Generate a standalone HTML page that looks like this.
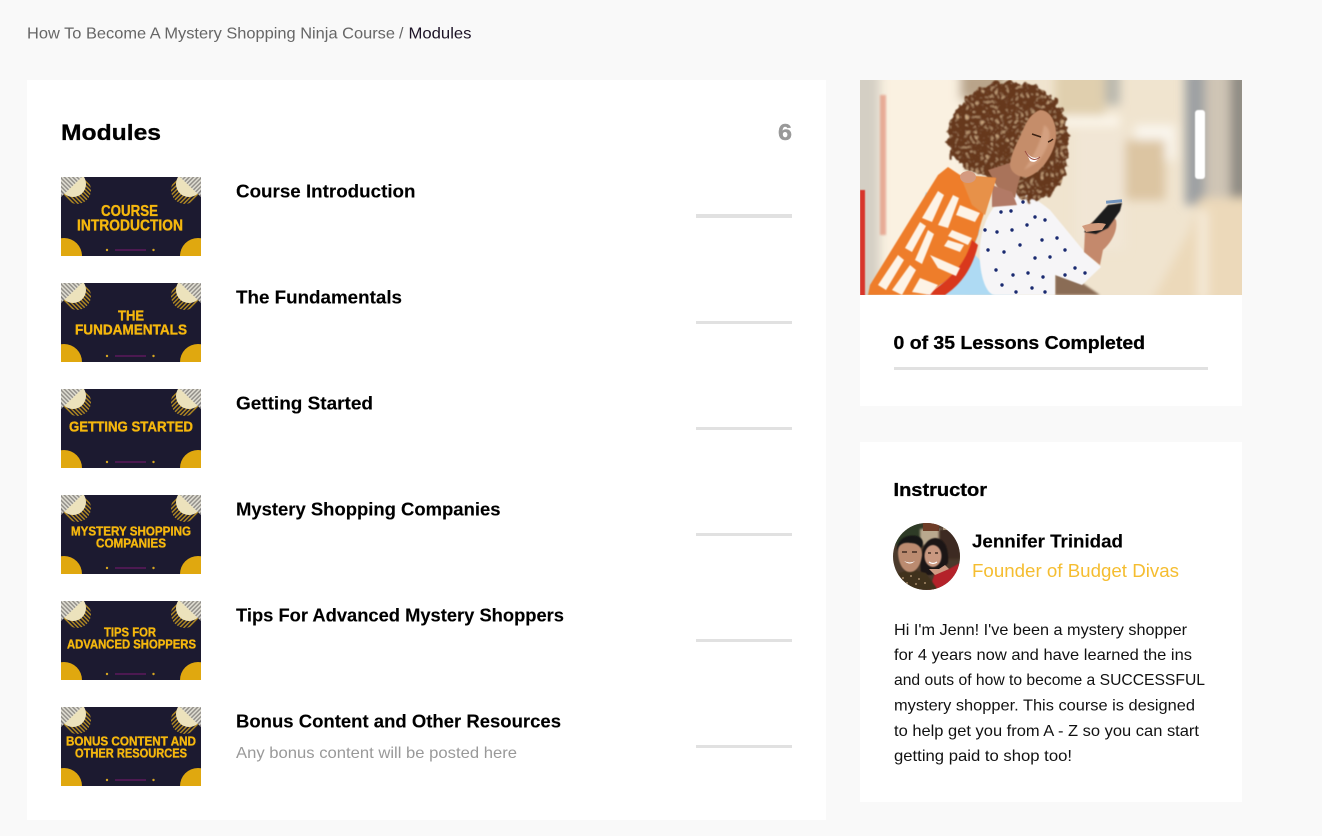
<!DOCTYPE html>
<html lang="en"><head><meta charset="utf-8"><title>Modules</title>
<style>
html,body{margin:0;padding:0;background:#f9f9f9;width:1322px;height:836px;overflow:hidden}
.card{position:absolute;background:#fff}
.bar{position:absolute;background:#e1e1e1}
svg{position:absolute;left:0;top:0;display:block}
text{font-family:"Liberation Sans",Arial,sans-serif}
.t{font-weight:700;font-size:18px;fill:#000;stroke:#000;stroke-width:.12px}
.m{font-weight:700;fill:#000;stroke:#000;stroke-width:.3px}
.b{font-size:16px;fill:#111}
.th{font-weight:700;fill:#f5b70f;stroke:#f5b70f;stroke-width:.35px;filter:url(#tb)}
</style></head><body>
<div class="card" style="left:27px;top:80px;width:799px;height:740px"></div>
<div class="card" style="left:860px;top:80px;width:382px;height:326px"></div>
<div class="card" style="left:860px;top:442px;width:382px;height:360px"></div>
<div class="bar" style="left:696px;top:214px;width:96px;height:4px"></div>
<div class="bar" style="left:696px;top:321px;width:96px;height:3px"></div>
<div class="bar" style="left:696px;top:427px;width:96px;height:3px"></div>
<div class="bar" style="left:696px;top:533px;width:96px;height:3px"></div>
<div class="bar" style="left:696px;top:639px;width:96px;height:3px"></div>
<div class="bar" style="left:696px;top:745px;width:96px;height:3px"></div>
<div class="bar" style="left:894px;top:367px;width:314px;height:3px"></div>

<svg width="1322" height="836" viewBox="0 0 1322 836" xmlns="http://www.w3.org/2000/svg">
<defs>
<filter id="tb" x="-5%" y="-20%" width="110%" height="140%"><feGaussianBlur stdDeviation="0.35"/></filter>
<filter id="b1" x="-20%" y="-20%" width="140%" height="140%"><feGaussianBlur stdDeviation="1"/></filter>
<filter id="b3" x="-20%" y="-20%" width="140%" height="140%"><feGaussianBlur stdDeviation="5"/></filter>
<filter id="b05" x="-20%" y="-20%" width="140%" height="140%"><feGaussianBlur stdDeviation="0.6"/></filter>
<filter id="curl" x="-15%" y="-15%" width="130%" height="130%">
<feTurbulence type="fractalNoise" baseFrequency=".14" numOctaves="2" seed="7" result="n"/>
<feDisplacementMap in="SourceGraphic" in2="n" scale="12" xChannelSelector="R" yChannelSelector="G" result="d"/>
<feTurbulence type="turbulence" baseFrequency=".2" numOctaves="2" seed="3" result="t"/>
<feColorMatrix in="t" type="matrix" values="0 0 0 0 .62  0 0 0 0 .40  0 0 0 0 .22  2.500 0 0 0 -.75" result="c"/>
<feComposite in="c" in2="d" operator="in" result="c2"/>
<feMerge result="m"><feMergeNode in="d"/><feMergeNode in="c2"/></feMerge>
<feGaussianBlur in="m" stdDeviation=".7"/>
</filter>
<pattern id="sg" width="3" height="3" patternUnits="userSpaceOnUse" patternTransform="rotate(45)"><rect width="3" height="1.500" fill="#8a8886"/><rect y="1.500" width="3" height="1.500" fill="#dedcd4"/></pattern>
<pattern id="sy" width="3" height="3" patternUnits="userSpaceOnUse" patternTransform="rotate(45)"><rect width="3" height="1.400" fill="#b58c22"/></pattern>
<pattern id="sy2" width="3" height="3" patternUnits="userSpaceOnUse" patternTransform="rotate(-45)"><rect width="3" height="1.400" fill="#b58c22"/></pattern>
<pattern id="sg2" width="3" height="3" patternUnits="userSpaceOnUse" patternTransform="rotate(-45)"><rect width="3" height="1.500" fill="#8a8886"/><rect y="1.500" width="3" height="1.500" fill="#dedcd4"/></pattern>
<clipPath id="tc"><rect width="140" height="79"/></clipPath>
<clipPath id="pc"><rect width="382" height="215"/></clipPath>
<clipPath id="ac"><circle cx="33.5" cy="33.5" r="33.5"/></clipPath>
<symbol id="th" width="140" height="79" viewBox="0 0 140 79" overflow="hidden">
<g clip-path="url(#tc)">
<rect width="140" height="79" fill="#1c1a30"/>
<circle cx="16" cy="13" r="14" fill="url(#sy)"/>
<circle cx="12" cy="7" r="13" fill="#ece2bc"/>
<polygon points="0,0 21,0 0,20" fill="url(#sg)" opacity=".9"/>
<circle cx="124" cy="13" r="14" fill="url(#sy2)"/>
<circle cx="128" cy="7" r="13" fill="#ece2bc"/>
<polygon points="140,0 119,0 140,20" fill="url(#sg2)" opacity=".9"/>
<circle cx="3" cy="79" r="18" fill="#e0a80f"/>
<circle cx="137" cy="79" r="18" fill="#e0a80f"/>
<circle cx="46" cy="73" r="1.200" fill="#d5a521"/>
<circle cx="92.500" cy="73" r="1.200" fill="#d5a521"/>
<rect x="54" y="72.300" width="31" height="1.400" fill="#7a1a70" opacity=".75"/>
</g>
</symbol>
</defs>

<text x="27" y="38.500" font-size="16" fill="#666" textLength="368" lengthAdjust="spacingAndGlyphs">How To Become A Mystery Shopping Ninja Course</text>
<text x="399" y="38.500" font-size="16" fill="#666">/</text>
<text x="408.500" y="38.500" font-size="16" fill="#1c1226" textLength="63" lengthAdjust="spacingAndGlyphs">Modules</text>

<text class="m" x="61" y="140" font-size="22" textLength="100" lengthAdjust="spacingAndGlyphs">Modules</text>
<text x="778" y="140" font-size="23" font-weight="700" fill="#999" stroke="#999" stroke-width=".4" textLength="14" lengthAdjust="spacingAndGlyphs">6</text>

<use href="#th" x="61" y="177"/>
<use href="#th" x="61" y="283"/>
<use href="#th" x="61" y="389"/>
<use href="#th" x="61" y="495"/>
<use href="#th" x="61" y="601"/>
<use href="#th" x="61" y="707"/>

<text class="th" x="101" y="216" font-size="15.500" textLength="57" lengthAdjust="spacingAndGlyphs">COURSE</text>
<text class="th" x="77" y="230.500" font-size="15.500" textLength="106" lengthAdjust="spacingAndGlyphs">INTRODUCTION</text>
<text class="th" x="118" y="320.500" font-size="15" textLength="26" lengthAdjust="spacingAndGlyphs">THE</text>
<text class="th" x="75" y="334.500" font-size="15" textLength="112" lengthAdjust="spacingAndGlyphs">FUNDAMENTALS</text>
<text class="th" x="69" y="431.500" font-size="15" textLength="124" lengthAdjust="spacingAndGlyphs">GETTING STARTED</text>
<text class="th" x="71" y="535.500" font-size="12.500" textLength="120" lengthAdjust="spacingAndGlyphs">MYSTERY SHOPPING</text>
<text class="th" x="96" y="547.500" font-size="12.500" textLength="70" lengthAdjust="spacingAndGlyphs">COMPANIES</text>
<text class="th" x="104" y="636.500" font-size="12.500" textLength="52" lengthAdjust="spacingAndGlyphs">TIPS FOR</text>
<text class="th" x="67" y="648.500" font-size="12.500" textLength="129" lengthAdjust="spacingAndGlyphs">ADVANCED SHOPPERS</text>
<text class="th" x="66" y="745.500" font-size="12.500" textLength="130" lengthAdjust="spacingAndGlyphs">BONUS CONTENT AND</text>
<text class="th" x="75" y="757.500" font-size="12.500" textLength="112" lengthAdjust="spacingAndGlyphs">OTHER RESOURCES</text>

<text class="t" x="236" y="197.500" textLength="179.500" lengthAdjust="spacingAndGlyphs">Course Introduction</text>
<text class="t" x="236" y="303.500" textLength="166" lengthAdjust="spacingAndGlyphs">The Fundamentals</text>
<text class="t" x="236" y="409.500" textLength="137" lengthAdjust="spacingAndGlyphs">Getting Started</text>
<text class="t" x="236" y="515.500" textLength="264.500" lengthAdjust="spacingAndGlyphs">Mystery Shopping Companies</text>
<text class="t" x="236" y="621.500" textLength="328" lengthAdjust="spacingAndGlyphs">Tips For Advanced Mystery Shoppers</text>
<text class="t" x="236" y="727.500" textLength="325" lengthAdjust="spacingAndGlyphs">Bonus Content and Other Resources</text>
<text x="236" y="758" font-size="16" fill="#999" textLength="281" lengthAdjust="spacingAndGlyphs">Any bonus content will be posted here</text>

<!-- photo -->
<svg x="860" y="80" width="382" height="215" viewBox="0 0 382 215">
<g clip-path="url(#pc)">
<rect width="382" height="215" fill="#f0e4cf"/>
<g filter="url(#b3)">
<rect x="-10" y="-10" width="30" height="235" fill="#d4cfc4"/>
<rect x="20" y="-10" width="85" height="235" fill="#faf1e1"/>
<rect x="100" y="-10" width="45" height="30" fill="#b9a48a"/>
<rect x="195" y="-10" width="50" height="50" fill="#e0cfae"/>
<rect x="200" y="36" width="60" height="10" fill="#fdf8ee"/>
<rect x="215" y="50" width="50" height="120" fill="#f1e6d5"/>
<rect x="245" y="-10" width="15" height="35" fill="#b9b8ae"/>
<rect x="275" y="45" width="40" height="35" fill="#faf6ee"/>
<rect x="265" y="60" width="40" height="60" fill="#dcc5a2"/>
<rect x="325" y="-10" width="20" height="135" fill="#9da0a3"/>
<rect x="345" y="-10" width="25" height="135" fill="#cfc5b5"/>
<rect x="370" y="-10" width="20" height="135" fill="#908c84"/>
<polygon points="290,225 330,150 340,118 395,118 395,225" fill="#ecd9ba"/>
<rect x="338" y="130" width="10" height="90" fill="#f5ead8"/>
</g>
<rect x="335" y="30" width="10" height="69" rx="3" fill="#fff" filter="url(#b05)"/>
<rect x="0" y="110" width="5" height="110" fill="#d8352a" filter="url(#b05)"/>
<rect x="20" y="15" width="6" height="140" fill="#e07a60" opacity=".55" filter="url(#b1)"/>
<!-- blue bag -->
<polygon points="50,175 66,112 120,150 112,172 155,215 85,215" fill="#aedaf3" filter="url(#b05)"/>
<!-- fur bag -->
<polygon points="195,178 215,198 240,215 195,215" fill="#8a6c54" filter="url(#b1)"/>
<!-- shirt -->
<path d="M155 107 C145 118 125 125 120 165 C118 190 125 215 135 215 L195 215 L195 195 L222 205 L241 187 L223 170 L190 130 C180 122 170 115 155 107 Z" fill="#f6f5f7" filter="url(#b05)"/>
<g fill="#1a2a70">
<circle cx="125" cy="150" r="1.700"/><circle cx="141" cy="132" r="1.700"/><circle cx="151" cy="131" r="1.700"/><circle cx="163" cy="122" r="1.700"/><circle cx="175" cy="137" r="1.700"/><circle cx="185" cy="140" r="1.700"/><circle cx="137" cy="152" r="1.700"/><circle cx="152" cy="150" r="1.700"/><circle cx="167" cy="145" r="1.700"/><circle cx="182" cy="160" r="1.700"/><circle cx="197" cy="158" r="1.700"/><circle cx="205" cy="170" r="1.700"/><circle cx="128" cy="170" r="1.700"/><circle cx="144" cy="172" r="1.700"/><circle cx="160" cy="165" r="1.700"/><circle cx="175" cy="178" r="1.700"/><circle cx="190" cy="177" r="1.700"/><circle cx="215" cy="188" r="1.700"/><circle cx="225" cy="193" r="1.700"/><circle cx="136" cy="190" r="1.700"/><circle cx="153" cy="195" r="1.700"/><circle cx="168" cy="193" r="1.700"/><circle cx="183" cy="197" r="1.700"/><circle cx="156" cy="212" r="1.700"/><circle cx="172" cy="208" r="1.700"/><circle cx="185" cy="212" r="1.700"/><circle cx="205" cy="195" r="1.700"/><circle cx="236" cy="178" r="1.500"/><circle cx="142" cy="205" r="1.700"/>
</g>
<!-- hair -->
<path d="M88 72 C84 42 100 10 140 2 C168 -3 196 10 204 36 C212 62 210 90 198 106 C188 124 168 124 154 112 C132 98 106 94 88 72 Z" fill="#66391b" filter="url(#curl)"/>
<!-- neck & hand -->
<path d="M128 90 L165 78 L158 105 L155 118 L140 112 Z" fill="#a9735a" filter="url(#b05)"/>
<path d="M132 105 L152 112 L157 125 L132 127 Z" fill="#b27a66" filter="url(#b05)"/>
<!-- face -->
<path d="M180 30 C190 30 197 42 196 58 C194 74 182 92 168 97 C158 98 150 92 150 84 C152 70 158 62 163 50 C167 40 172 33 180 30 Z" fill="#c58d6b" filter="url(#b05)"/>
<path d="M184 45 C194 50 190 66 178 82 L164 90 C172 78 180 66 184 45 Z" fill="#dcab8c" opacity=".65" filter="url(#b1)"/>
<path d="M166 72 Q172 80 179 77 Q176 84 170 81 Z" fill="#fff"/>
<path d="M165 71 Q172 84 180 77" stroke="#9b4c40" stroke-width="1" fill="none"/>
<path d="M172 54 q6 2 9 3 M188 62 q3 -1 5 -3" stroke="#3d2415" stroke-width="1.500" fill="none"/>
<!-- orange bag -->
<path d="M8 215 L10 205 L50 140 L78 95 L88 87 L100 95 L136 98 C132 115 122 135 118 155 C110 175 100 195 80 205 L66 215 Z" fill="#ee7d2a" filter="url(#b05)"/>
<path d="M66 215 C90 200 105 185 112 160 L118 165 C112 190 100 205 85 215 Z" fill="#d9391f" filter="url(#b05)"/>
<path d="M100 95 L136 98 L125 135 L112 125 Z" fill="#e7914a" filter="url(#b05)"/>
<g fill="#fdf3e6" filter="url(#b05)">
<polygon points="62,138 78,111 84,115 72,142"/><polygon points="78,145 93,115 99,118 88,148"/>
<polygon points="100,125 120,133 115,142 96,135"/><polygon points="92,150 112,158 108,165 88,156"/>
<polygon points="45,168 60,142 66,146 52,172"/><polygon points="55,180 68,150 74,154 62,184"/>
<polygon points="88,160 104,165 100,172 84,166"/><polygon points="70,175 100,188 96,196 78,188"/>
<polygon points="18,205 38,175 44,180 26,210"/><polygon points="32,210 50,185 56,190 42,215"/>
<polygon points="60,198 78,205 70,215 52,212"/>
</g>
<ellipse cx="108" cy="97" rx="8" ry="6" fill="#d49a80"/>
<!-- sleeve hand phone -->
<path d="M225 150 C230 140 250 132 256 140 C258 150 252 162 243 170 L240 185 L224 172 Z" fill="#c4896c" filter="url(#b05)"/>
<path d="M224 152 L248 125 L262 123 L260 131 L248 148 L236 154 Z" fill="#1a1a1f" filter="url(#b05)"/>
<rect x="246" y="120" width="16" height="3" fill="#3b6fb0" opacity=".7" transform="rotate(-5 254 121)"/>
<path d="M222 146 C230 143 240 142 246 144 L242 150 L226 152 Z" fill="#d19a7c"/>
</g>
</svg>

<text class="m" x="893.500" y="349" font-size="18.500" textLength="251.500" lengthAdjust="spacingAndGlyphs">0 of 35 Lessons Completed</text>
<text class="m" x="893.500" y="496" font-size="18" textLength="93.500" lengthAdjust="spacingAndGlyphs">Instructor</text>

<!-- avatar -->
<svg x="893" y="523" width="67" height="67" viewBox="0 0 67 67">
<g clip-path="url(#ac)">
<rect width="67" height="67" fill="#4b3a2c"/>
<rect x="0" y="0" width="30" height="22" fill="#2f3a26" filter="url(#b1)"/>
<rect x="27" y="6" width="24" height="16" fill="#b9a88e" filter="url(#b1)"/>
<rect x="30" y="0" width="16" height="8" fill="#6e3d28"/>
<rect x="46" y="6" width="21" height="30" fill="#3c2a20" filter="url(#b1)"/>
<rect x="50" y="0" width="17" height="7" fill="#a5917a"/>
<path d="M36 67 L42 50 L56 46 L67 40 L67 67 Z" fill="#b4212b" filter="url(#b05)"/>
<path d="M28 52 C26 32 30 16 42 15 C52 15 56 26 55 40 L50 46 L38 52 Z" fill="#1d1715" filter="url(#b05)"/>
<ellipse cx="40" cy="33" rx="8.500" ry="11" fill="#c99880" filter="url(#b05)"/>
<path d="M36 39 q4 3 8 0" stroke="#fff" stroke-width="1.200" fill="none"/>
<path d="M35 30 h3 M42 30 h3" stroke="#2b1b14" stroke-width="1.200"/>
<path d="M36 46 L46 46 L52 42 L56 46 L42 52 Z" fill="#cf9c84"/>
<path d="M1 67 L3 51 L18 46 L33 50 L45 67 Z" fill="#41311f" filter="url(#b05)"/>
<path d="M4 26 C5 15 15 11 24 13 C30 15 31 20 29 24 L6 30 Z" fill="#171413" filter="url(#b05)"/>
<path d="M5 28 C5 22 10 19 17 20 C25 20 29 24 29 32 C28 41 24 49 17 49 C10 49 5 40 5 28 Z" fill="#bb8b70" filter="url(#b05)"/>
<path d="M11 38 q6 3 11 0 q-5 5 -11 0" fill="#fff"/>
<path d="M9 29 h5 M19 29 h5" stroke="#2b1b14" stroke-width="1.300"/>
<g fill="#a58a68"><circle cx="10" cy="55" r="1"/><circle cx="18" cy="53" r="1"/><circle cx="26" cy="56" r="1"/><circle cx="14" cy="60" r="1"/><circle cx="23" cy="61" r="1"/><circle cx="32" cy="60" r="1"/><circle cx="7" cy="62" r="1"/></g>
</g>
</svg>

<text class="t" x="972" y="547.500" textLength="151" lengthAdjust="spacingAndGlyphs">Jennifer Trinidad</text>
<text x="972" y="577" font-size="18" fill="#f5bd30" textLength="207" lengthAdjust="spacingAndGlyphs">Founder of Budget Divas</text>

<text class="b" x="894" y="635" textLength="293" lengthAdjust="spacingAndGlyphs">Hi I'm Jenn! I've been a mystery shopper</text>
<text class="b" x="894" y="660" textLength="298" lengthAdjust="spacingAndGlyphs">for 4 years now and have learned the ins</text>
<text class="b" x="894" y="685" textLength="311" lengthAdjust="spacingAndGlyphs">and outs of how to become a SUCCESSFUL</text>
<text class="b" x="894" y="710.500" textLength="301" lengthAdjust="spacingAndGlyphs">mystery shopper. This course is designed</text>
<text class="b" x="894" y="736" textLength="305" lengthAdjust="spacingAndGlyphs">to help get you from A - Z so you can start</text>
<text class="b" x="894" y="761" textLength="178" lengthAdjust="spacingAndGlyphs">getting paid to shop too!</text>
</svg>
</body></html>
